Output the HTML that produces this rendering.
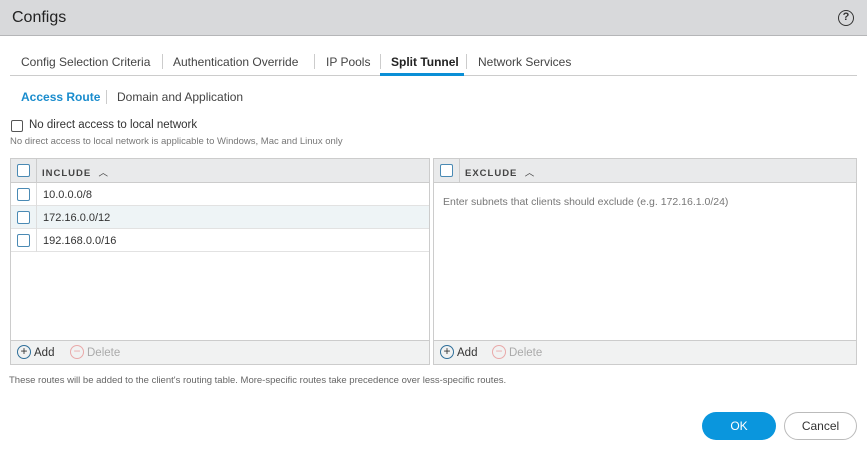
<!DOCTYPE html>
<html><head><style>
*{box-sizing:border-box;margin:0;padding:0}
body{width:867px;height:456px;background:#fff;font-family:"Liberation Sans",sans-serif;color:#333;position:relative;overflow:hidden;font-size:12px}
.hdr{position:absolute;left:0;top:0;width:867px;height:36px;background:#d8d9db;border-bottom:1px solid #b5b6b8}
.hdr .t{position:absolute;left:12px;top:9px;font-size:16px;color:#222}
.help{position:absolute;left:838px;top:10px;width:16px;height:16px;border:1.5px solid #333;border-radius:50%;font-size:11px;text-align:center;line-height:13px;font-weight:bold}
.a{position:absolute;white-space:nowrap}
.tabs{position:absolute;left:10px;top:75px;width:847px;border-top:1px solid #ccc}
.sep{position:absolute;width:1px;background:#ccc}
.cb{position:absolute;width:13px;height:13px;border:1.5px solid #4a8ab4;border-radius:2px;background:#fff}
.tbl{position:absolute;top:158px;height:207px;border:1px solid #ccc;background:#fff}
.th{position:absolute;left:0;top:0;right:0;height:24px;background:#e9eaeb;border-bottom:1px solid #ccc}
.tf{position:absolute;left:0;bottom:0;right:0;height:24px;background:#f1f2f2;border-top:1px solid #ccc}
.row{position:absolute;left:0;right:0;height:23px;border-bottom:1px solid #e2e2e2}
.circ{position:absolute;width:14px;height:14px;border-radius:50%;border:1px solid #2f6f9a;font-size:12px;line-height:11px;text-align:center}
.btn{position:absolute;top:412px;height:28px;border-radius:14px;font-size:12px;text-align:center;line-height:28px}
</style></head><body>
<div class="hdr"><div class="t">Configs</div><div class="help">?</div></div>
<div class="a" style="left:21px;top:55px;font-size:12px;color:#444">Config Selection Criteria</div>
<div class="sep" style="left:162px;top:54px;height:15px"></div>
<div class="a" style="left:173px;top:55px;color:#444">Authentication Override</div>
<div class="sep" style="left:314px;top:54px;height:15px"></div>
<div class="a" style="left:326px;top:55px;color:#444">IP Pools</div>
<div class="sep" style="left:380px;top:54px;height:15px"></div>
<div class="a" style="left:391px;top:55px;font-weight:bold;color:#222">Split Tunnel</div>
<div class="sep" style="left:466px;top:54px;height:15px"></div>
<div class="a" style="left:478px;top:55px;color:#444">Network Services</div>
<div class="tabs"></div>
<div style="position:absolute;left:380px;top:73px;width:84px;height:3px;background:#0a8fd6"></div>
<div class="a" style="left:21px;top:90px;font-weight:bold;color:#1a8ccd">Access Route</div>
<div class="sep" style="left:106px;top:90px;height:14px"></div>
<div class="a" style="left:117px;top:90px;color:#444">Domain and Application</div>
<div class="cb" style="left:11px;top:120px;border-color:#555;width:12px;height:12px"></div>
<div class="a" style="left:29px;top:119px;font-size:11.5px">No direct access to local network</div>
<div class="a" style="left:10px;top:136px;font-size:9.5px;color:#777">No direct access to local network is applicable to Windows, Mac and Linux only</div>

<div class="tbl" style="left:10px;width:420px">
 <div class="th"><div class="cb" style="left:6px;top:5px"></div><div class="sep" style="left:25px;top:0;height:24px"></div>
 <div class="a" style="left:31px;top:6px;font-size:9.5px;font-weight:bold;letter-spacing:1px;color:#444">INCLUDE &nbsp;<span style="font-weight:normal">︿</span></div></div>
 <div class="row" style="top:24px"><div class="cb" style="left:6px;top:5px"></div><div class="sep" style="left:25px;top:0;height:23px;background:#ddd"></div><div class="a" style="left:32px;top:6px;font-size:11px">10.0.0.0/8</div></div>
 <div class="row" style="top:47px;background:#eef4f6"><div class="cb" style="left:6px;top:5px"></div><div class="sep" style="left:25px;top:0;height:23px;background:#ddd"></div><div class="a" style="left:32px;top:6px;font-size:11px">172.16.0.0/12</div></div>
 <div class="row" style="top:70px"><div class="cb" style="left:6px;top:5px"></div><div class="sep" style="left:25px;top:0;height:23px;background:#ddd"></div><div class="a" style="left:32px;top:6px;font-size:11px">192.168.0.0/16</div></div>
 <div class="tf"><div class="circ" style="left:6px;top:4px">+</div><div class="a" style="left:23px;top:6px;font-size:11.5px">Add</div>
 <div class="circ" style="left:59px;top:4px;border-color:#e9a9a9;color:#e9a9a9">−</div><div class="a" style="left:76px;top:6px;font-size:11.5px;color:#aaa">Delete</div></div>
</div>
<div class="tbl" style="left:433px;width:424px">
 <div class="th"><div class="cb" style="left:6px;top:5px"></div><div class="sep" style="left:25px;top:0;height:24px"></div>
 <div class="a" style="left:31px;top:6px;font-size:9.5px;font-weight:bold;letter-spacing:1px;color:#444">EXCLUDE &nbsp;<span style="font-weight:normal">︿</span></div></div>
 <div class="a" style="left:9px;top:37px;font-size:10.5px;color:#777">Enter subnets that clients should exclude (e.g. 172.16.1.0/24)</div>
 <div class="tf"><div class="circ" style="left:6px;top:4px">+</div><div class="a" style="left:23px;top:6px;font-size:11.5px">Add</div>
 <div class="circ" style="left:58px;top:4px;border-color:#e9a9a9;color:#e9a9a9">−</div><div class="a" style="left:75px;top:6px;font-size:11.5px;color:#aaa">Delete</div></div>
</div>
<div class="a" style="left:9px;top:375px;font-size:9.5px;color:#666">These routes will be added to the client's routing table. More-specific routes take precedence over less-specific routes.</div>
<div class="btn" style="left:702px;width:74px;background:#0a96dd;color:#fff">OK</div>
<div class="btn" style="left:784px;width:73px;border:1px solid #bbb;color:#333;line-height:26px">Cancel</div>
</body></html>
